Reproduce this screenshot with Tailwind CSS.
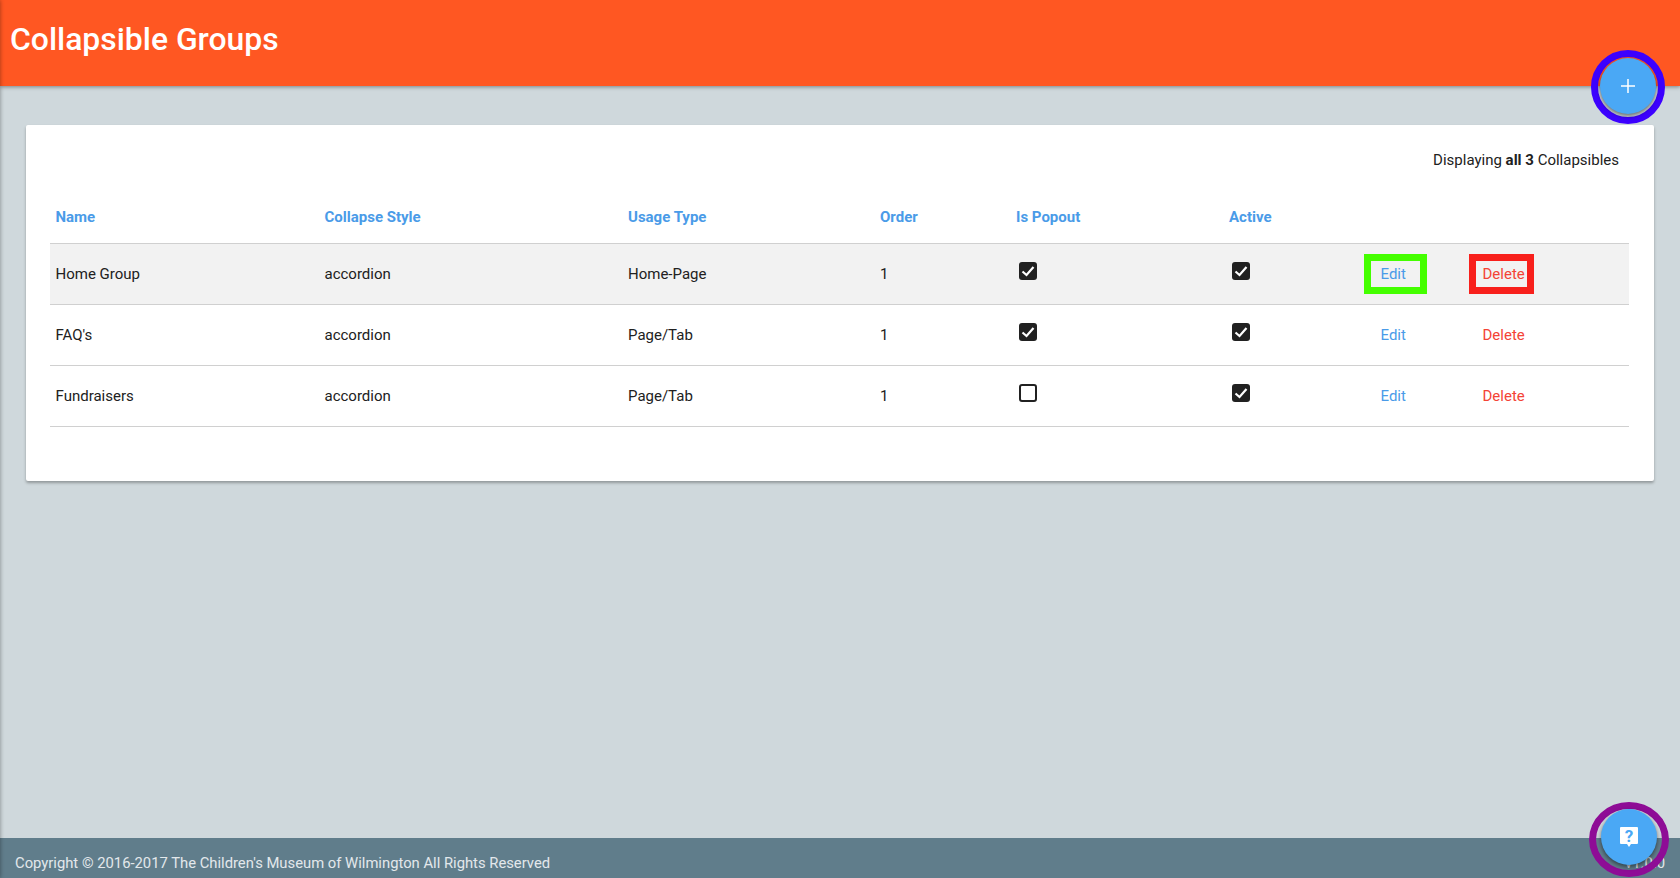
<!DOCTYPE html>
<html lang="en">
<head>
  <meta charset="UTF-8" />
  <title>Collapsible Groups</title>
  <script src="https://cdn.jsdelivr.net/npm/@tailwindcss/browser@4"></script>
</head>
<body class="relative h-[878px] overflow-hidden bg-[#cfd8dc] font-['Roboto',sans-serif] text-[15px] text-[#212121]">

  <div class="flex h-full flex-col">
    <!-- Header -->
    <header class="flex h-[86px] shrink-0 items-center bg-[#ff5722] pl-[10px] pb-[7px] shadow-[0_1px_4px_rgba(0,0,0,0.4)]">
      <h1 class="text-[31.9px] font-medium text-white">Collapsible Groups</h1>
    </header>

    <!-- Main -->
    <main class="flex-1 px-[26px] pt-[39px]">
      <section class="h-[356px] w-[1628px] rounded-[2px] bg-white px-[24px] pt-[25px] shadow-[0_2px_3px_rgba(0,0,0,0.3)]">
        <p class="pr-[11px] text-right leading-[20px]">Displaying <b class="font-bold">all 3</b> Collapsibles</p>

        <table class="mt-[23px] w-[1579px] table-fixed border-collapse text-left">
          <colgroup>
            <col class="w-[269px]" /><col class="w-[303px]" /><col class="w-[252px]" /><col class="w-[136px]" />
            <col class="w-[213px]" /><col class="w-[152px]" /><col class="w-[102px]" /><col class="w-[152px]" />
          </colgroup>
          <thead class="text-[#4a9be8]">
            <tr class="h-[50px] border-b border-[#d0d0d0]">
              <th class="pb-[1px] pl-[5.5px] font-bold">Name</th>
              <th class="pb-[1px] pl-[5.5px] font-bold">Collapse Style</th>
              <th class="pb-[1px] pl-[6px] font-bold">Usage Type</th>
              <th class="pb-[1px] pl-[6px] font-bold">Order</th>
              <th class="pb-[1px] pl-[6px] font-bold">Is Popout</th>
              <th class="pb-[1px] pl-[6px] font-bold">Active</th>
              <th></th>
              <th></th>
            </tr>
          </thead>
          <tbody>
            <tr class="h-[61px] border-b border-[#d0d0d0] bg-[#f2f2f2]">
              <td class="pt-[2px] pl-[5.5px]">Home Group</td>
              <td class="pt-[2px] pl-[5.5px]">accordion</td>
              <td class="pt-[2px] pl-[6px]">Home-Page</td>
              <td class="pt-[2px] pl-[6px]">1</td>
              <td class="pl-[9px]"><span class="mb-[5px] flex h-[18px] w-[18px] items-center justify-center rounded-[3px] bg-[#212121]"><svg viewBox="0 0 18 18" class="h-[18px] w-[18px]"><path d="M3.5 9.5l4 3.5 7-8" fill="none" stroke="#fff" stroke-width="2.2" /></svg></span></td>
              <td class="pl-[9px]"><span class="mb-[5px] flex h-[18px] w-[18px] items-center justify-center rounded-[3px] bg-[#212121]"><svg viewBox="0 0 18 18" class="h-[18px] w-[18px]"><path d="M3.5 9.5l4 3.5 7-8" fill="none" stroke="#fff" stroke-width="2.2" /></svg></span></td>
              <td class="pt-[2px] pl-[5.5px]"><a class="relative text-[#4a9be8]">Edit<span class="absolute top-[-11px] left-[-16.5px] h-[40px] w-[63px] border-[7px] border-[#44ff00]"></span></a></td>
              <td class="pt-[2px] pl-[5.5px]"><a class="relative text-[#f44336]">Delete<span class="absolute top-[-11px] left-[-13.5px] h-[40px] w-[65px] border-[7px] border-[#f8201c]"></span></a></td>
            </tr>
            <tr class="h-[61px] border-b border-[#d0d0d0]">
              <td class="pt-[2px] pl-[5.5px]">FAQ's</td>
              <td class="pt-[2px] pl-[5.5px]">accordion</td>
              <td class="pt-[2px] pl-[6px]">Page/Tab</td>
              <td class="pt-[2px] pl-[6px]">1</td>
              <td class="pl-[9px]"><span class="mb-[5px] flex h-[18px] w-[18px] items-center justify-center rounded-[3px] bg-[#212121]"><svg viewBox="0 0 18 18" class="h-[18px] w-[18px]"><path d="M3.5 9.5l4 3.5 7-8" fill="none" stroke="#fff" stroke-width="2.2" /></svg></span></td>
              <td class="pl-[9px]"><span class="mb-[5px] flex h-[18px] w-[18px] items-center justify-center rounded-[3px] bg-[#212121]"><svg viewBox="0 0 18 18" class="h-[18px] w-[18px]"><path d="M3.5 9.5l4 3.5 7-8" fill="none" stroke="#fff" stroke-width="2.2" /></svg></span></td>
              <td class="pt-[2px] pl-[5.5px]"><a class="text-[#4a9be8]">Edit</a></td>
              <td class="pt-[2px] pl-[5.5px]"><a class="text-[#f44336]">Delete</a></td>
            </tr>
            <tr class="h-[61px] border-b border-[#d0d0d0]">
              <td class="pt-[2px] pl-[5.5px]">Fundraisers</td>
              <td class="pt-[2px] pl-[5.5px]">accordion</td>
              <td class="pt-[2px] pl-[6px]">Page/Tab</td>
              <td class="pt-[2px] pl-[6px]">1</td>
              <td class="pl-[9px]"><span class="mb-[5px] block h-[18px] w-[18px] rounded-[3px] border-2 border-[#212121]"></span></td>
              <td class="pl-[9px]"><span class="mb-[5px] flex h-[18px] w-[18px] items-center justify-center rounded-[3px] bg-[#212121]"><svg viewBox="0 0 18 18" class="h-[18px] w-[18px]"><path d="M3.5 9.5l4 3.5 7-8" fill="none" stroke="#fff" stroke-width="2.2" /></svg></span></td>
              <td class="pt-[2px] pl-[5.5px]"><a class="text-[#4a9be8]">Edit</a></td>
              <td class="pt-[2px] pl-[5.5px]"><a class="text-[#f44336]">Delete</a></td>
            </tr>
          </tbody>
        </table>
      </section>
    </main>

    <!-- Footer -->
    <footer class="flex h-[40px] shrink-0 items-center justify-between bg-[#607d8b] pl-[15px] pr-[15px] pt-[10px] text-[14.8px] text-[#e3e8eb]">
      <span>Copyright © 2016-2017 The Children's Museum of Wilmington All Rights Reserved</span>
      <span>v1.0.0</span>
    </footer>
  </div>

  <!-- Shadow of the closed side nav -->
  <div class="absolute top-0 left-[-4px] h-full w-[4px] shadow-[0_0_4px_rgba(0,0,0,0.4)]"></div>

  <!-- Add button -->
  <button class="absolute top-[50px] left-[1591px] flex h-[74px] w-[74px] items-center justify-center rounded-full border-[7px] border-[#3c00ff]">
    <span class="mb-[3px] flex h-[56px] w-[56px] items-center justify-center rounded-full bg-[#4aa8f5] shadow-[0_2px_4px_rgba(0,0,0,0.5)]">
      <svg viewBox="0 0 14 14" class="h-[14px] w-[14px]"><path d="M7 0v14M0 7h14" stroke="#fff" stroke-width="1.5" /></svg>
    </span>
  </button>

  <!-- Help button -->
  <button class="absolute top-[802px] left-[1589px] flex h-[75px] w-[80px] items-center justify-center rounded-[50%] border-[7px] border-[#8e0c96]">
    <span class="mb-[5px] flex h-[56px] w-[56px] items-center justify-center rounded-full bg-[#4aa8f5] shadow-[0_2px_4px_rgba(0,0,0,0.5)]">
      <svg viewBox="0 0 18 20" class="h-[20px] w-[18px]">
        <path d="M1 0h16a1 1 0 0 1 1 1v15a1 1 0 0 1-1 1h-6L9 20l-2-3H1a1 1 0 0 1-1-1V1a1 1 0 0 1 1-1z" fill="#fff" />
        <text x="9" y="14.8" text-anchor="middle" font-family="Roboto" font-weight="700" font-size="17" fill="#4aa8f5">?</text>
      </svg>
    </span>
  </button>

</body>
</html>
